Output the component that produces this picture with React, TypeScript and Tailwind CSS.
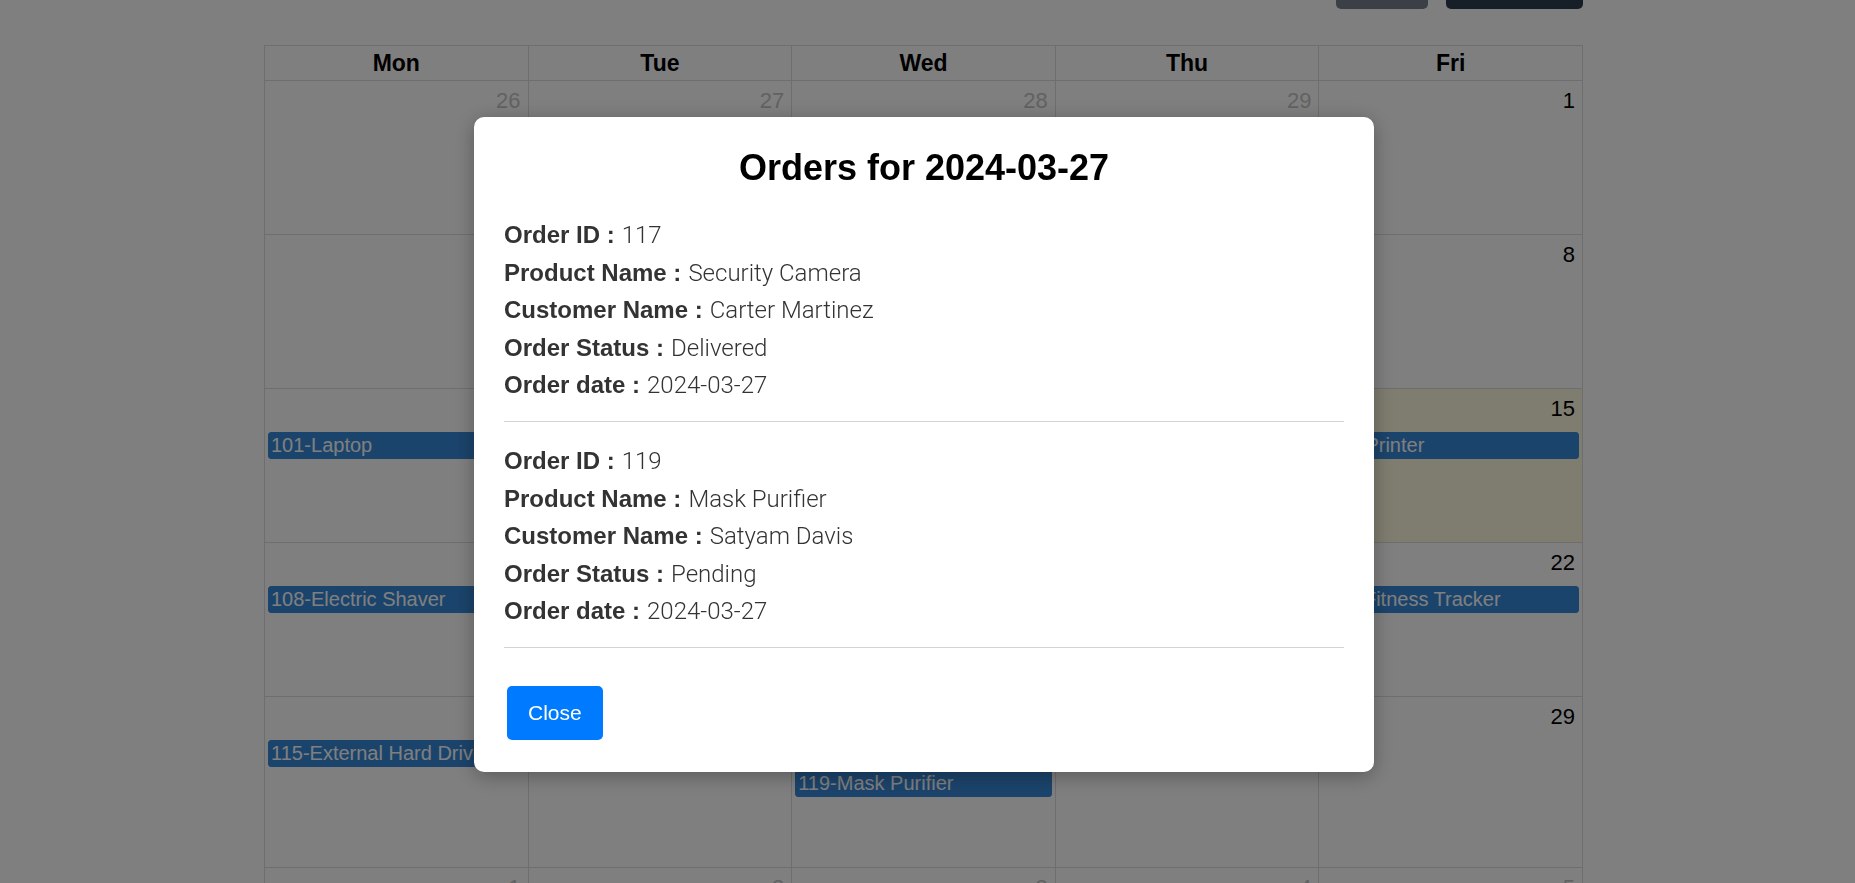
import React, { useState } from 'react';

type Day = { n: number; muted?: boolean; today?: boolean; events?: string[] };

const weekDays = ['Mon', 'Tue', 'Wed', 'Thu', 'Fri'];

const weeks: { height: string; days: Day[] }[] = [
  {
    height: 'h-[154px]',
    days: [
      { n: 26, muted: true },
      { n: 27, muted: true },
      { n: 28, muted: true },
      { n: 29, muted: true },
      { n: 1 },
    ],
  },
  {
    height: 'h-[154px]',
    days: [{ n: 4 }, { n: 5 }, { n: 6 }, { n: 7 }, { n: 8 }],
  },
  {
    height: 'h-[154px]',
    days: [
      { n: 11, events: ['101-Laptop'] },
      { n: 12, events: ['102-Smartphone'] },
      { n: 13, events: ['103-Headphones'] },
      { n: 14, events: ['104-Tablet'] },
      { n: 15, today: true, events: ['105-Printer'] },
    ],
  },
  {
    height: 'h-[154px]',
    days: [
      { n: 18, events: ['108-Electric Shaver'] },
      { n: 19, events: ['109-Smart Watch'] },
      { n: 20, events: ['110-Keyboard'] },
      { n: 21, events: ['111-Monitor'] },
      { n: 22, events: ['112-Fitness Tracker'] },
    ],
  },
  {
    height: 'h-[171px]',
    days: [
      { n: 25, events: ['115-External Hard Drive'] },
      { n: 26, events: ['116-Webcam'] },
      { n: 27, events: ['117-Security Camera', '119-Mask Purifier'] },
      { n: 28, events: ['118-Router'] },
      { n: 29 },
    ],
  },
  {
    height: 'h-[154px]',
    days: [
      { n: 1, muted: true },
      { n: 2, muted: true },
      { n: 3, muted: true },
      { n: 4, muted: true },
      { n: 5, muted: true },
    ],
  },
];

const orders = [
  {
    id: 117,
    product: 'Security Camera',
    customer: 'Carter Martinez',
    status: 'Delivered',
    date: '2024-03-27',
  },
  {
    id: 119,
    product: 'Mask Purifier',
    customer: 'Satyam Davis',
    status: 'Pending',
    date: '2024-03-27',
  },
];

const Row = ({ label, value }: { label: string; value: string | number }) => (
  <div className="h-[37.5px] flex items-baseline pt-[6px] text-[#333] whitespace-nowrap">
    <span className="font-['Liberation_Sans',Arial,sans-serif] font-bold text-[24px] leading-[26px]">{label} :</span>
    <span className="ml-[7px] font-['Roboto',sans-serif] font-light text-[24px] leading-[26px]">{value}</span>
  </div>
);

const App: React.FC = () => {
  const [open, setOpen] = useState(true);

  return (
    <div className="min-h-screen bg-white font-['Liberation_Sans',Arial,sans-serif] text-black">
      <div className="ml-[264px] w-[1319px]">
        <div className="h-[9px] flex justify-end items-end gap-[18px] mb-[36px]">
          <button className="h-[45px] w-[92px] shrink-0 rounded-[5px] bg-[#2c3e50] opacity-65 text-white text-[20px]">
            today
          </button>
          <div className="flex shrink-0">
            <button className="h-[45px] w-[68px] rounded-l-[5px] bg-[#2c3e50] text-white text-[20px]">‹</button>
            <button className="h-[45px] w-[69px] rounded-r-[5px] bg-[#2c3e50] text-white text-[20px]">›</button>
          </div>
        </div>

        <div className="border-l border-t border-[#ddd]">
          <div className="grid grid-cols-5">
            {weekDays.map((d) => (
              <div
                key={d}
                className="h-[35px] border-r border-b border-[#ddd] flex items-center justify-center font-bold text-[23px]"
              >
                {d}
              </div>
            ))}
          </div>
          {weeks.map((w, wi) => (
            <div key={wi} className="grid grid-cols-5">
              {w.days.map((day, di) => (
                <div
                  key={di}
                  className={`${w.height} border-r border-b border-[#ddd] overflow-hidden ${
                    day.today ? 'bg-[#fffadf]' : ''
                  }`}
                >
                  <div
                    className={`h-[43px] pt-[6px] pr-[7px] text-right text-[22px] leading-[28px] ${
                      day.muted ? 'text-[#c4c4c4]' : 'text-black'
                    }`}
                  >
                    {day.n}
                  </div>
                  <div className="flex flex-col gap-[3px]">
                    {(day.events || []).map((e) => (
                      <div
                        key={e}
                        className="mx-[3px] h-[27px] rounded-[3px] border border-[#3788d8] bg-[#3788d8] px-[2px] text-white text-[20px] leading-[25px] whitespace-nowrap overflow-hidden"
                      >
                        {e}
                      </div>
                    ))}
                  </div>
                </div>
              ))}
            </div>
          ))}
        </div>
      </div>

      {open && (
        <div className="fixed inset-0 bg-black/50 flex items-start justify-center pt-[117px] pr-[7px]">
          <div className="w-[900px] bg-white rounded-[10px] shadow-[0_4px_20px_rgba(0,0,0,0.3)] px-[30px] pt-[30px] pb-[32px]">
            <h2 className="text-center text-[36px] leading-[41px] font-bold text-black mb-[28px]">
              Orders for 2024-03-27
            </h2>
            {orders.map((o) => (
              <div key={o.id} className="mb-[20.75px] pb-[17px] border-b border-[#d4d4d4]">
                <Row label="Order ID" value={o.id} />
                <Row label="Product Name" value={o.product} />
                <Row label="Customer Name" value={o.customer} />
                <Row label="Order Status" value={o.status} />
                <Row label="Order date" value={o.date} />
              </div>
            ))}
            <div className="pt-[17px]">
              <button
                onClick={() => setOpen(false)}
                className="ml-[3px] h-[54px] px-[21px] rounded-[5px] bg-[#007bff] text-white text-[21px]"
              >
                Close
              </button>
            </div>
          </div>
        </div>
      )}
    </div>
  );
};

export default App;
